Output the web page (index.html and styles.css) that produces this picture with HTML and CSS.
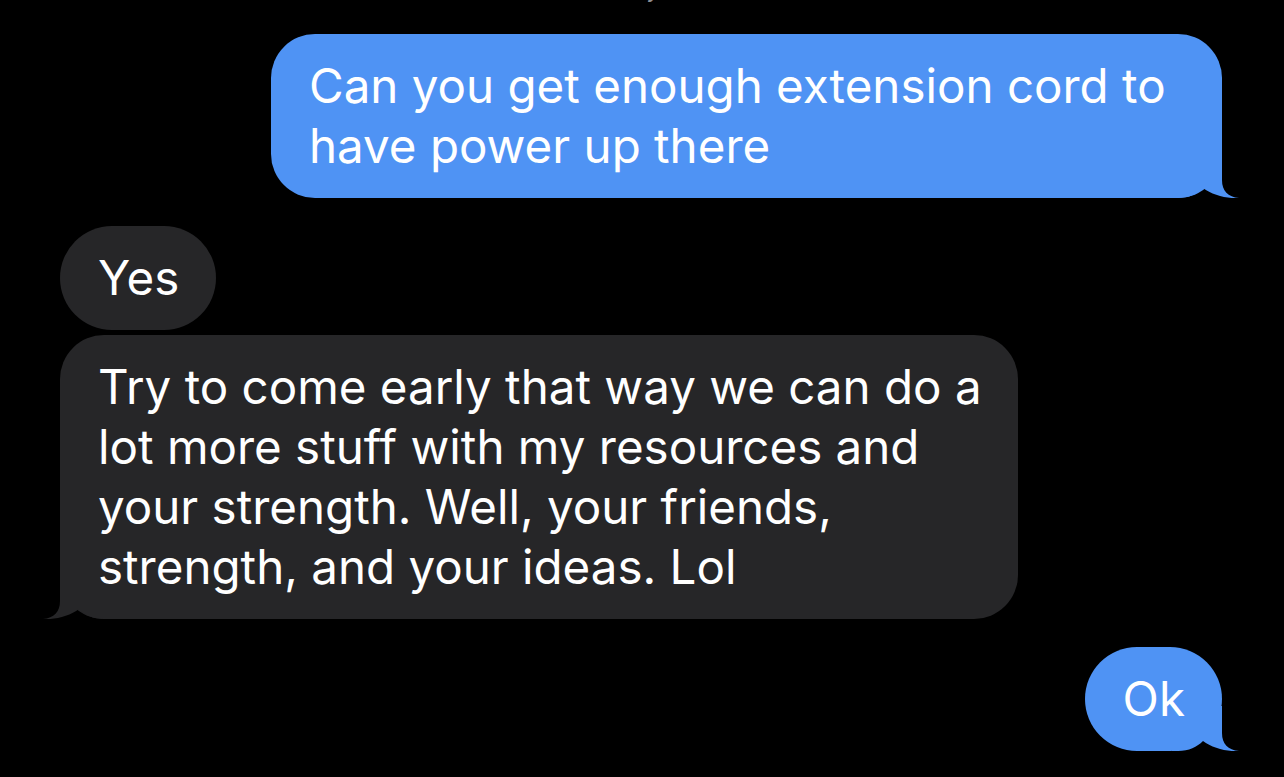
FILE: index.html
```html
<!DOCTYPE html>
<html lang="en">
<head>
<meta charset="utf-8">
<title>Messages</title>
<link rel="stylesheet" href="styles.css">
</head>
<body>
<main class="thread">
  <div class="stamp"><span class="stamp-text">Today</span></div>

  <div class="row out first">
    <div class="bubble blue b-first">
      Can you get enough extension cord to have power up there
      <svg class="tail tail-r" width="70" height="45" viewBox="-50 -45 70 45" aria-hidden="true"><path d="M-50 0 L-50 -45 L0 -45 L0 -18 C0 -7 6 -1 17 0 C6 1 -10 -3 -19 -10 C-25 -4 -33 0 -44 0 Z"/></svg>
    </div>
  </div>

  <div class="row in gap-big">
    <div class="bubble gray">Yes</div>
  </div>

  <div class="row in gap-small">
    <div class="bubble gray b-long">
      Try to come early that way we can do a lot more stuff with my resources and your strength. Well, your friends, strength, and your ideas. Lol
      <svg class="tail tail-l" width="70" height="45" viewBox="-20 -45 70 45" aria-hidden="true"><path d="M50 0 L50 -45 L0 -45 L0 -18 C0 -7 -6 -1 -17 0 C-6 1 10 -3 19 -10 C25 -4 33 0 44 0 Z"/></svg>
    </div>
  </div>

  <div class="row out gap-big">
    <div class="bubble blue">
      Ok
      <svg class="tail tail-r" width="70" height="45" viewBox="-50 -45 70 45" aria-hidden="true"><path d="M-50 0 L-50 -45 L0 -45 L0 -18 C0 -7 6 -1 17 0 C6 1 -10 -3 -19 -10 C-25 -4 -33 0 -44 0 Z"/></svg>
    </div>
  </div>
</main>
</body>
</html>
```

FILE: styles.css
```css
* {
  box-sizing: border-box;
}

html, body {
  margin: 0;
  padding: 0;
  background: #000;
  height: 100%;
  overflow: hidden;
}

body {
  font-family: Inter, "Noto Sans", "Liberation Sans", sans-serif;
  color: #fff;
}

.thread {
  display: flex;
  flex-direction: column;
}

.stamp {
  margin-top: -26px;
  height: 30px;
  line-height: 30px;
  text-align: center;
  font-size: 24px;
  color: #8e8e93;
}

.stamp-text {
  display: inline-block;
  padding-right: 34px;
}

.row {
  display: flex;
}

.row.out {
  justify-content: flex-end;
  padding-right: 62px;
}

.row.in {
  justify-content: flex-start;
  padding-left: 60px;
}

.row.first {
  margin-top: 30px;
}

.gap-big {
  margin-top: 28px;
}

.gap-small {
  margin-top: 5px;
}

.bubble {
  position: relative;
  z-index: 0;
  font-size: 47.5px;
  line-height: 60px;
  padding: 22px 37px 22px 38px;
  border-radius: 52px;
  max-width: 960px;
}

.blue {
  background: #4f93f4;
}

.blue .tail {
  fill: #4f93f4;
}

.gray {
  background: #262628;
}

.gray .tail {
  fill: #262628;
}

.b-first {
  width: 951px;
  border-radius: 44px;
}

.b-long {
  width: 958px;
  padding-right: 24px;
  border-radius: 44px;
}

.tail {
  position: absolute;
  z-index: -1;
  bottom: 0;
  display: block;
}

.tail-r {
  right: -20px;
}

.tail-l {
  left: -20px;
}
```
